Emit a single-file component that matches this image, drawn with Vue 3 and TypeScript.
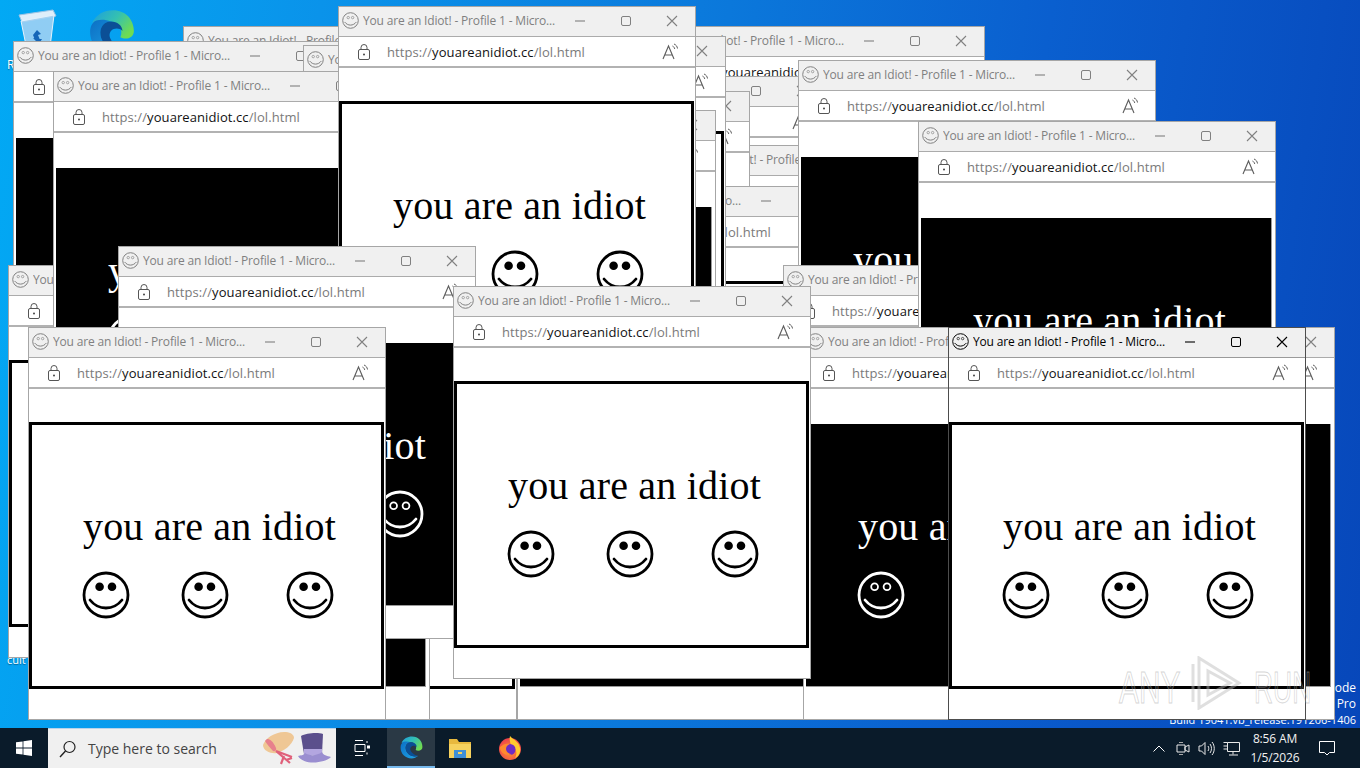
<script setup lang="ts">
interface Win {
  x: number
  y: number
  dark?: boolean
  active?: boolean
}

// bottom of the stack first
const windows: Win[] = [
  { x: 183, y: 26 },
  { x: 13, y: 41, dark: true },
  { x: 8, y: 265 },
  { x: 303, y: 45 },
  { x: 53, y: 71, dark: true },
  { x: 627, y: 26 },
  { x: 468, y: 76 },
  { x: 643, y: 145 },
  { x: 392, y: 91 },
  { x: 524, y: 186 },
  { x: 368, y: 36 },
  { x: 358, y: 110, dark: true },
  { x: 338, y: 6 },
  { x: 798, y: 60, dark: true },
  { x: 783, y: 265 },
  { x: 918, y: 121, dark: true },
  { x: 159, y: 327 },
  { x: 72, y: 327, dark: true },
  { x: 118, y: 246, dark: true },
  { x: 28, y: 327 },
  { x: 517, y: 327, dark: true },
  { x: 803, y: 327, dark: true },
  { x: 453, y: 286 },
  { x: 977, y: 327, dark: true },
  { x: 948, y: 327, active: true }
]

const pos = (w: Win) => ({ left: w.x + 'px', top: w.y + 'px' })
</script>

<template>
  <svg class="defs" width="0" height="0">
    <defs>
      <linearGradient id="edgeTop" x1="0" y1="0" x2="1" y2="0.6">
        <stop offset="0" stop-color="#1b9de2" />
        <stop offset="0.55" stop-color="#35c1b0" />
        <stop offset="1" stop-color="#6fdc52" />
      </linearGradient>
      <linearGradient id="edgeBody" x1="0" y1="0" x2="1" y2="1">
        <stop offset="0" stop-color="#0c6fc4" />
        <stop offset="1" stop-color="#1fa6e8" />
      </linearGradient>
      <radialGradient id="foxBody" cx="0.5" cy="0.6" r="0.6">
        <stop offset="0" stop-color="#ff9a2e" />
        <stop offset="1" stop-color="#ee3f4d" />
      </radialGradient>
    </defs>
    <symbol id="face" viewBox="0 0 48 48">
      <circle cx="24" cy="24" r="22" fill="none" stroke="currentColor" stroke-width="2.8" />
      <circle cx="17.6" cy="15.8" r="3.4" fill="var(--eye)" stroke="currentColor" stroke-width="1.8" />
      <circle cx="30" cy="15.8" r="3.4" fill="var(--eye)" stroke="currentColor" stroke-width="1.8" />
      <path d="M8 29c4 5 10 8 16 8s12-3 16-8" fill="none" stroke="currentColor" stroke-width="2.8" stroke-linecap="round" />
    </symbol>
    <symbol id="edge" viewBox="0 0 48 48">
      <path d="M5 15C9 7 16 3 25 3c12 0 20 9 20 20 0 7-8 9-13 6 3-6-1-14-9-15-7-1-13 1-18 1z" fill="url(#edgeTop)" />
      <path d="M3 24c0-6 3-10 6-11 4-1 9-1 14 1-7 0-11 6-10 13 1 9 13 18 24 13-4 3-8 5-13 5C12 45 3 36 3 24z" fill="url(#edgeBody)" />
      <path d="M13 27c-1-7 3-13 10-13 6 0 11 4 11 9-3-3-8-3-11 0-4 5 1 14 14 17-11 5-23-4-24-13z" fill="#0b4f96" />
    </symbol>
  </svg>

  <div class="screen">
    <div class="desktop">
      <div class="shortcut bin-pos">
        <svg width="42" height="48" viewBox="0 0 42 48">
          <path d="M3 6l34-5 3 6-34 6z" fill="#dfeefa" stroke="#9cc4e4" />
          <path d="M5 12l33-6-5 40H12z" fill="#a9d4f3" fill-opacity=".85" stroke="#e4f2fc" />
          <path d="M17 26l4-5 4 4-3 1 2 5h-5zM26 30l-3 5-5-1 2-2-3-3 5 1z" fill="#1566b8" />
        </svg>
      </div>
      <svg class="shortcut edge-pos" width="50" height="50"><use href="#edge" /></svg>
      <span class="label bin-label">Recycle Bin</span>
      <span class="label cult-label">cult</span>
      <div class="build">
        <span>Test Mode</span>
        <span>Windows 10 Pro</span>
        <span class="build-no">Build 19041.vb_release.191206-1406</span>
      </div>

      <section
        v-for="(w, i) in windows"
        :key="i"
        class="win"
        :class="{ active: w.active }"
        :style="pos(w)"
      >
        <header class="bar">
          <svg class="fav"><use href="#face" /></svg>
          <span class="title">You are an Idiot! - Profile 1 - Micro...</span>
          <svg class="ctl min" width="12" height="12" viewBox="0 0 12 12">
            <path d="M1 6h10" stroke="currentColor" stroke-width="1.1" />
          </svg>
          <svg class="ctl max" width="12" height="12" viewBox="0 0 12 12">
            <rect x="1.5" y="1.5" width="9" height="9" rx="1.5" fill="none" stroke="currentColor" />
          </svg>
          <svg class="ctl close" width="12" height="12" viewBox="0 0 12 12">
            <path d="M1 1l10 10M11 1L1 11" stroke="currentColor" stroke-width="1.1" />
          </svg>
        </header>
        <div class="addr">
          <svg class="lock" width="12" height="16" viewBox="0 0 12 16">
            <rect x=".5" y="5.5" width="11" height="10" rx="1.5" fill="none" stroke="#555" />
            <path d="M3 5.5V3.5a3 3 0 0 1 6 0v2" fill="none" stroke="#555" />
            <circle cx="6" cy="10.5" r="1" fill="#444" />
          </svg>
          <span class="url">https://<b>youareanidiot.cc</b>/lol.html</span>
          <svg class="reader" width="18" height="17" viewBox="0 0 18 17">
            <path d="M1 16L6.500 3 12 16M3 12h7" fill="none" stroke="#5c5c5c" stroke-width="1.100" />
            <path d="M10.500 3c1.200.6 2 1.700 2.200 3M12 1c2 .8 3.200 2.300 3.500 4.500" fill="none" stroke="#5c5c5c" />
          </svg>
        </div>
        <div class="page">
          <div class="box" :class="{ dark: w.dark }">
            <h1>you are an idiot</h1>
            <div class="faces">
              <svg v-for="n in 3" :key="n" class="face"><use href="#face" /></svg>
            </div>
          </div>
        </div>
      </section>

      <div class="mark">
        <span class="mark-any">ANY</span>
        <svg width="54" height="54" viewBox="0 0 54 54">
          <path d="M2 8v38M8 2v50l40-25z" fill="none" stroke="#b8b8b8" stroke-opacity=".45" stroke-width="3" />
          <path d="M17 15v24l22-12z" fill="none" stroke="#b8b8b8" stroke-opacity=".45" stroke-width="3" />
        </svg>
        <span class="mark-run">RUN</span>
      </div>
    </div>

    <footer class="taskbar">
      <div class="start">
        <svg width="16" height="16" viewBox="0 0 16 16">
          <path d="M0 2.300l6.600-.9v6.200H0zM7.400 1.300L16 0v7.600H7.400zM0 8.400h6.600v6.200L0 13.700zM7.400 8.400H16V16l-8.600-1.300z" fill="#fff" />
        </svg>
      </div>
      <div class="search">
        <svg width="18" height="18" viewBox="0 0 18 18">
          <circle cx="10.500" cy="7" r="5.500" fill="none" stroke="#222" stroke-width="1.200" />
          <path d="M6.500 11L1 17" stroke="#222" stroke-width="1.400" />
        </svg>
        <span class="hint">Type here to search</span>
        <svg class="hats" width="70" height="38" viewBox="0 0 70 38">
          <path d="M1 15C3 8 14 1 24 2c5 .5 8 3 8 6-2 7-10 13-17 15-6 1-14-2-14-8z" fill="#efc795" />
          <path d="M5 9c3 0 6 2 9 9 1 2-1 4-3 3-3-3-6-7-8-10z" fill="#e7808c" />
          <path d="M14 21l14 12M14 21l16 6M22 26l-3 8M24 30l6-2" fill="none" stroke="#e0607a" stroke-width="2.200" />
          <path d="M39 6c5-3 17-4 22-2l-1 20H42z" fill="#5b4f8c" />
          <path d="M42 19h18v6H42z" fill="#b3a6e0" />
          <path d="M36 26c3-1 5 0 7-3 4 3 12 3 17-1 1 3 5 4 9 5-6 6-27 9-33-1z" fill="#9a8ed0" />
        </svg>
      </div>
      <div class="cell taskview">
        <svg width="16" height="16" viewBox="0 0 16 16">
          <path d="M1 .5h8M1 15.500h8M1 4.500h10v7H1zM13 1v2M13 12.500v2" fill="none" stroke="#fff" />
          <rect x="13" y="5.500" width="3" height="3" fill="#fff" />
        </svg>
      </div>
      <div class="cell running">
        <svg width="25" height="25"><use href="#edge" /></svg>
      </div>
      <div class="cell files">
        <svg width="24" height="22" viewBox="0 0 24 22">
          <path d="M1 2h8l2 3h12v16H1z" fill="#e8b93e" />
          <path d="M1 7h22v14H1z" fill="#f6d25e" />
          <rect x="6" y="13" width="12" height="8" fill="#3f8fd6" />
          <rect x="10" y="15" width="4" height="2" fill="#f6d25e" />
        </svg>
      </div>
      <div class="cell fox">
        <svg width="24" height="26" viewBox="0 0 24 26">
          <circle cx="12" cy="14" r="11" fill="url(#foxBody)" />
          <path d="M12 1c2 3 9 5 10 12 1 5-2 9-5 10 3-5 1-10-4-13-1-3-2-6-1-9z" fill="#ffcb2e" />
          <circle cx="12" cy="14.500" r="5.500" fill="#6d2cc4" />
          <path d="M2 12c3-3 7-4 10-3-2 1-4 2-4 5 0 3 3 5 6 5-3 2-9 1-11-3-1-1-1-3-1-4z" fill="#ff8a2e" />
        </svg>
      </div>
      <div class="tray">
        <svg class="chev" width="12" height="7" viewBox="0 0 12 7">
          <path d="M.5 6.500L6 1l5.500 5.500" fill="none" stroke="#fff" />
        </svg>
        <svg width="14" height="16" viewBox="0 0 14 16">
          <path d="M1 5h8v7H1zM9 7l4-2v7l-4-2z" fill="none" stroke="#e8e8e8" />
          <path d="M3 2.500h4M3 14.500h4" stroke="#aaa" />
        </svg>
        <svg width="17" height="15" viewBox="0 0 17 15">
          <path d="M1 5h2.500L7 1.500v12L3.500 10H1zM10 5c1 1.500 1 3.500 0 5M12 3c2 2.500 2 6.500 0 9M14 1c3 3.500 3 9.500 0 13" fill="none" stroke="#e8e8e8" />
        </svg>
        <svg width="17" height="15" viewBox="0 0 17 15">
          <path d="M4.500 1.500h12v9h-12zM10 10.500v3M6 14h9M.5 1.500h4M.5 5h4M.5 8h4" fill="none" stroke="#e8e8e8" />
        </svg>
      </div>
      <div class="clock">
        <span>8:56 AM</span>
        <span>1/5/2026</span>
      </div>
      <div class="notify">
        <svg width="16" height="15" viewBox="0 0 16 15">
          <path d="M.5.500h15v11h-5L8 14l-2.500-2.500h-5z" fill="none" stroke="#fff" />
        </svg>
      </div>
    </footer>
  </div>
</template>

<style>
html,
body {
  margin: 0;
  overflow: hidden;
}
</style>

<style scoped>
.defs {
  position: absolute;
}

.screen {
  width: 1360px;
  height: 768px;
  display: flex;
  flex-direction: column;
  font-family: "Open Sans", "Noto Sans", sans-serif;
}

.desktop {
  flex: 1;
  position: relative;
  overflow: hidden;
  background: linear-gradient(98deg, #02a9f4 0%, #0a93ea 22%, #0b78db 50%, #0a5fcf 72%, #0747ba 100%);
}

.shortcut {
  position: absolute;
}

.bin-pos {
  left: 16px;
  top: 9px;
}

.edge-pos {
  left: 87px;
  top: 7px;
}

.label {
  position: absolute;
  color: #fff;
  font-size: 12px;
  line-height: 14px;
  text-shadow: 0 1px 1px rgba(0, 0, 0, .4);
}

.bin-label {
  left: 7px;
  top: 58px;
}

.cult-label {
  left: 7px;
  top: 653px;
  font-size: 11px;
}

.build {
  position: absolute;
  right: 4px;
  bottom: 0;
  display: flex;
  flex-direction: column;
  align-items: flex-end;
  color: #fff;
  font-size: 12px;
  line-height: 16px;
}

.build-no {
  font-size: 11px;
}

.win {
  position: absolute;
  width: 358px;
  height: 393px;
  box-sizing: border-box;
  display: flex;
  flex-direction: column;
  background: #fff;
  border: 1px solid #a6a6a6;
  color: #808080;
}

.win.active {
  border-color: #4d4d4d;
  color: #000;
}

.bar {
  height: 30px;
  flex: none;
  display: flex;
  align-items: center;
  padding-bottom: 2px;
  background: #f0f0f0;
  border-bottom: 1px solid #ababab;
  box-sizing: border-box;
  --eye: transparent;
}

.win.active .bar {
  border-bottom-color: #9a9a9a;
}

.fav {
  width: 17px;
  height: 17px;
  margin-left: 3px;
  flex: none;
}

.title {
  margin-left: 4px;
  width: 205px;
  font-size: 12px;
  white-space: nowrap;
  overflow: hidden;
  letter-spacing: -.17px;
}

.ctl {
  flex: none;
}

.min {
  margin-left: 6px;
}

.max {
  margin-left: 34px;
}

.close {
  margin-left: 34px;
}

.addr {
  height: 31px;
  flex: none;
  display: flex;
  align-items: center;
  box-sizing: border-box;
  border-bottom: 2px solid #b2b2b2;
  background: #fff;
}

.lock {
  margin-left: 19px;
  flex: none;
}

.url {
  margin-left: 17px;
  width: 272px;
  font-size: 13px;
  color: #7a7a7a;
  white-space: nowrap;
  letter-spacing: .09px;
}

.url b {
  font-weight: 400;
  color: #111;
}

.reader {
  margin-left: 3px;
  flex: none;
}

.page {
  flex: 1;
  padding-top: 33px;
}

.box {
  width: 355px;
  height: 267px;
  box-sizing: border-box;
  border: 3px solid #000;
  background: #fff;
  color: #000;
  --eye: #000;
}

.box.dark {
  border: 2px solid #fff;
  padding: 1px;
  background: #000;
  color: #fff;
  box-shadow: inset -1px -1px 0 #9a9a9a;
}

.box h1 {
  margin: 0;
  padding: 79px 0 0 6px;
  text-align: center;
  font: 400 40px/46px "Liberation Serif", "Times New Roman", serif;
  letter-spacing: .2px;
  white-space: nowrap;
}

.faces {
  display: flex;
  margin-top: 21px;
  padding-left: 50px;
}

.face {
  width: 48px;
  height: 48px;
  flex: none;
}

.face:nth-child(2) {
  margin-left: 51px;
}

.face:nth-child(3) {
  margin-left: 57px;
}

.mark {
  position: absolute;
  left: 1119px;
  top: 656px;
  width: 192px;
  height: 54px;
  display: flex;
  align-items: center;
  font: 400 44px/54px "Liberation Sans", Arial, sans-serif;
  color: rgba(255, 255, 255, .1);
  -webkit-text-stroke: 1px rgba(170, 170, 170, .5);
}

.mark span {
  display: inline-block;
  transform: translateY(5px) scaleX(.68);
  transform-origin: left center;
}

.mark-any {
  width: 72px;
}

.mark span.mark-run {
  width: 53px;
  margin-left: 9px;
  transform: translateY(5px) scaleX(.6);
}

.taskbar {
  height: 40px;
  flex: none;
  display: flex;
  align-items: stretch;
  background: #0a1b2a;
  color: #fff;
}

.start {
  width: 48px;
  display: flex;
  align-items: center;
  justify-content: center;
}

.search {
  width: 288px;
  display: flex;
  align-items: center;
  background: #f0f0f0;
  border-top: 1px solid #b9d3ea;
  box-sizing: border-box;
  padding-left: 11px;
  color: #444;
}

.hint {
  margin-left: 11px;
  width: 174px;
  font-size: 14px;
  white-space: nowrap;
}

.cell {
  display: flex;
  align-items: center;
  justify-content: center;
  box-sizing: border-box;
  width: 50px;
}

.taskview {
  width: 51px;
}

.running {
  width: 48px;
  background: #2a3945;
  border-bottom: 2px solid #76b9ed;
}

.tray {
  margin-left: auto;
  display: flex;
  align-items: center;
  gap: 8px;
}

.chev {
  margin-right: 3px;
}

.clock {
  width: 58px;
  margin-left: 6px;
  display: flex;
  flex-direction: column;
  align-items: center;
  justify-content: center;
  font-size: 12px;
  line-height: 19px;
  letter-spacing: -.15px;
  color: #f2f2f2;
}

.notify {
  width: 46px;
  margin-right: 10px;
  display: flex;
  align-items: center;
  justify-content: center;
}
</style>
